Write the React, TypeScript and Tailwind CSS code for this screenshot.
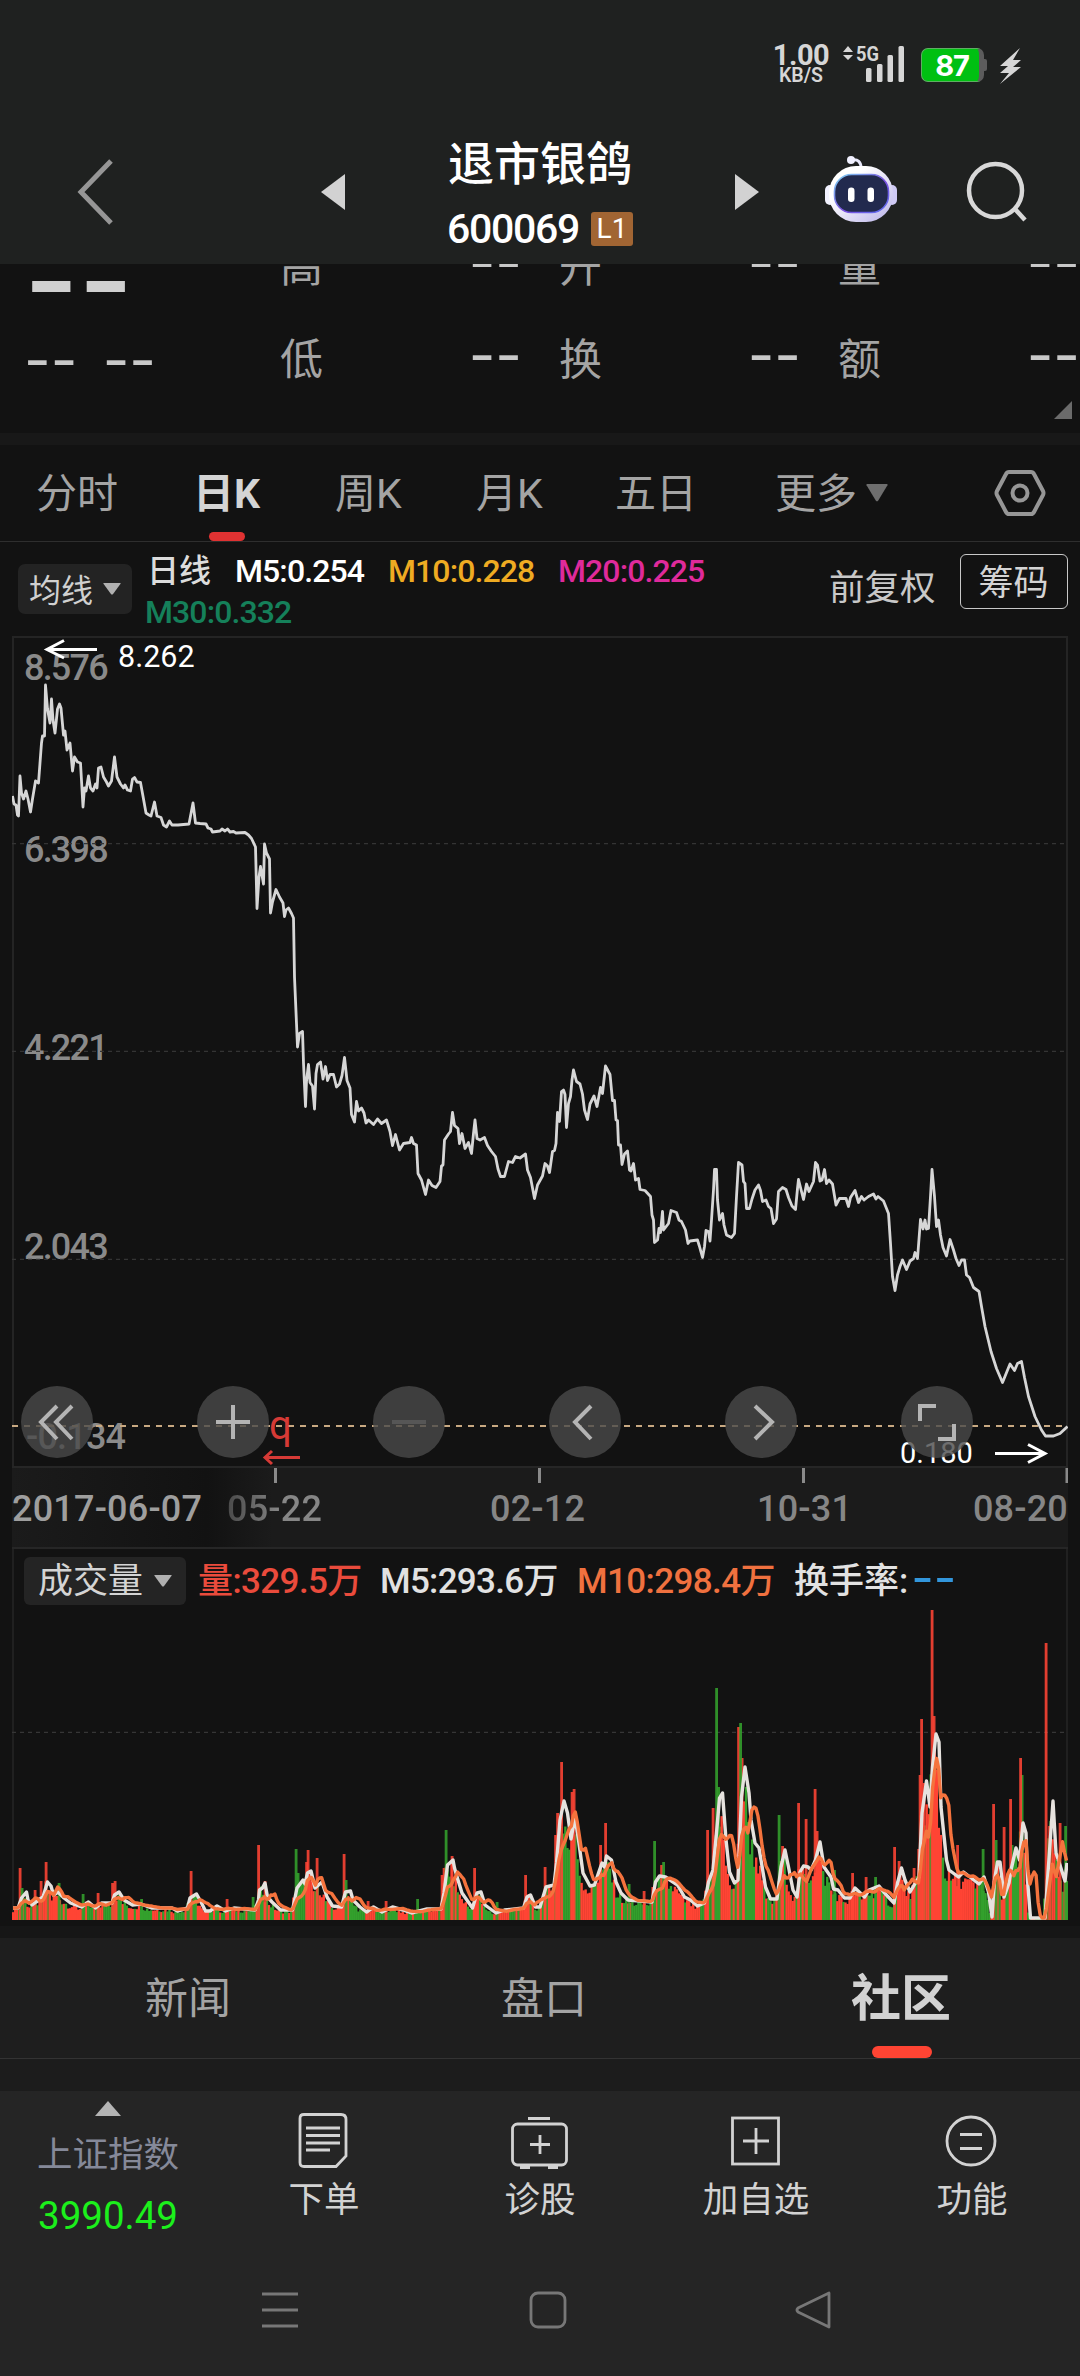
import type { ReactNode } from 'react';
import clsx from 'clsx';

type Point = [number, number];
type Spike = [number, number, 'r' | 'g'];

const UP = '#ff4434';
const DOWN = '#33a02c';
const VOLUME_BASE = 1920;

// daily close, already projected on the page grid
const closeLine =
	'12.5,796 14,804 16,805 17.5,815 18.5,816 20,776 21.5,793 23.5,799 26,791 28,799 30.5,812 32.5,799 35.5,781 38.5,783 41.5,743 42.5,736 44.5,736 45.5,685 47.5,709 50,723 51.5,699 53,720 55,733 57.5,709 59.5,704 61,708 63.5,735 65,731 67,750 70,743 72.5,771 74.5,757 77.5,762 80.5,763 83,807 84.5,788 86,791 88.5,776 90.5,788 93,791 95.5,784 97,788 98.5,768 101,767 103.5,777 106.5,782 108.5,786 111.5,781 114.5,757 117,777 120.5,784 123.5,788 125,785 127.5,790 130.5,791 132.5,779 134.5,777.5 137,782 140.5,782.5 143.5,799 146,813 149,815 151,816 154.5,802 157,816 161,817.5 163.5,825 166.5,827 169.5,821 172,825 178,825 189,824 193,803 195.5,823 200,823.5 206,824 208,828 211,829 212.5,832 220,831 222,829 225,831 227.5,829 230,832 233.5,831.5 236,833 245,832.5 248.5,835 251.5,838.5 255.5,847 257,908.5 259,877 260.5,866.5 263.5,884 264.5,844 266.5,853 269.5,859 270.5,913 272.5,902 276,889.5 279.5,897 283,903 284.5,916.5 286,910 288.5,908 291.5,913.5 293.5,918 294.5,977 296.5,1023.5 297.5,1047 299.5,1033.5 302.5,1031.5 303.5,1063 305.5,1106.5 306.5,1081 308.5,1064.5 310,1082.5 312.5,1086 314.5,1109 316,1073.5 317.5,1064.5 320.5,1062 323,1079 325.5,1066.5 327.5,1080.5 330,1074.5 333.5,1074.5 336.5,1087 339.5,1084 342,1075.5 344.5,1057.5 347,1080.5 350,1088 351.5,1114.5 354.5,1122 356.5,1101.5 358.5,1111 ' +
	'361.5,1108 364,1113 366,1123 368.5,1120 373.5,1124.5 377.5,1119 381.5,1123.5 386.5,1120 390,1131.5 392.5,1145.5 395.5,1134.5 399.5,1150 403.5,1143.5 410,1142.5 411.5,1137.5 413.5,1143.5 416.5,1145 418,1173.5 421.5,1180 425.5,1194.5 428.5,1180 432,1185.5 436,1187.5 440,1181.5 441.5,1166 443,1165 444.5,1140 448.5,1134 450.5,1131.5 452.5,1112.5 454.5,1125.5 458,1128.5 459.5,1143.5 462,1133.5 465,1148.5 468.5,1142.5 471.5,1153.5 473.5,1133.5 475,1120 477,1138.5 480,1140 484.5,1137.5 487.5,1145.5 491.5,1151.5 495.5,1156.5 498,1169 500.5,1176.5 504.5,1176.5 508.5,1161.5 512.5,1162.5 515.5,1156.5 520,1158 525.5,1154 527.5,1170 530.5,1177.5 534.5,1198.5 537.5,1185 542.5,1176 545,1163.5 547.5,1166 549.5,1172.5 552.5,1151.5 554.5,1150.5 556,1143.5 557.5,1112.5 559.5,1121.5 561.5,1091.5 563.5,1090 565,1094.5 566.5,1127.5 568.5,1103.5 570.5,1096.5 572,1080 573.5,1070 576.5,1081.5 580,1084 582.5,1094 584.5,1110 587.5,1119.5 590,1104 594,1096 597,1106.5 600.5,1087.5 602.5,1093.5 605.5,1066 610,1074.5 612.5,1100.5 614.5,1100.5 616,1120 617.5,1120.5 618.5,1145 620.5,1145 622,1164.5 624.5,1154 627.5,1151 629.5,1170 631,1171 633.5,1163.5 635.5,1180 638.5,1178.5 640,1189.5 645,1190.5 650.5,1196.5 652,1215 653.5,1220 654.5,1242.5 657.5,1240 659,1228.5 660.5,1232.5 662.5,1211.5 663.5,1230 668.5,1223.5 671,1210.5 676.5,1212.5 679,1220 681.5,1221.5 685.5,1230 688,1243.5 690,1241 697.5,1240 699.5,1246.5 702.5,1257.5 704.5,1246.5 706,1230.5 708.5,1231.5 710,1241 711.5,1220 713.5,1190 714.5,1169.5 716.5,1169.5 717.5,1200 719.5,1220 ' +
	'722.5,1213.5 724,1225 726.5,1235 731.5,1237.5 734.5,1233.5 736.5,1196.5 738.5,1162.5 742,1165 743.5,1181.5 745,1183.5 746.5,1208.5 749.5,1208.5 752,1199 755,1190 758.5,1185 760.5,1190.5 762.5,1201.5 766,1200 768.5,1206.5 771,1208.5 773.5,1223.5 776.5,1219 778.5,1191.5 782.5,1187.5 786,1189.5 788.5,1197.5 792,1206 795.5,1209.5 797.5,1188.5 798.5,1179.5 801,1189.5 803.5,1199.5 806.5,1184 809,1191.5 813.5,1181.5 815.5,1162.5 817.5,1165 820,1181 822,1180 824.5,1169.5 826.5,1183.5 829,1180 832.5,1184 836,1205 839.5,1198.5 846,1198.5 848.5,1206.5 850.5,1197.5 855,1190.5 858.5,1202.5 861.5,1196.5 864,1200 868.5,1196.5 873.5,1194 876,1199 878,1196.5 883.5,1201 886.5,1208.5 888.5,1213.5 890.5,1243.5 892.5,1276.5 895,1290.5 897.5,1275 900,1266.5 902.5,1260 906.5,1269.5 910,1261 913.5,1258.5 915,1252.5 917.5,1258.5 920.5,1219.5 923,1229 925,1220 926.5,1229 928.5,1228.5 930.5,1196.5 932,1169.5 934.5,1196.5 936.5,1226.5 938.5,1220 940.5,1235 943,1247.5 946.5,1256 950,1239.5 953.5,1250 956,1258.5 959,1265.5 961.5,1260 964.5,1260 966.5,1275 969.5,1277.5 973.5,1287.5 979,1291.5 981.5,1306.5 985,1326.5 991,1351.5 996.5,1368.5 1002.5,1382.5 1010,1364 1014.5,1370.5 1017.5,1363.5 1021.5,1361.5 1024.5,1377.5 1028.5,1396.5 1035,1416.5 1041.5,1430 1045.5,1436 1053.5,1436 1060,1433.5 1067.5,1426.5';

const ma5: Point[] = [
	[13, 1908], [18, 1908], [21.5, 1898], [26.5, 1892], [28, 1900], [32, 1905], [36, 1902], [43, 1897], [47.5, 1882], [51, 1886],
	[53.5, 1895], [58, 1892], [64, 1898], [70.5, 1903], [81.5, 1907], [88.5, 1902], [95.5, 1908], [101.5, 1903], [112, 1903], [114.5, 1895],
	[119, 1892], [124, 1900], [132.5, 1905], [141, 1904], [151.5, 1908], [172, 1908], [177.5, 1911], [187.5, 1908], [190, 1898], [196.5, 1894],
	[201.5, 1903], [205.5, 1911], [210, 1911], [217, 1906], [225.5, 1911], [234, 1908], [255, 1910], [258.5, 1900], [259.5, 1890], [262.5, 1888],
	[265, 1883], [267.5, 1897], [272, 1902], [280.5, 1910], [292.5, 1910], [297, 1888], [303, 1880], [305, 1884], [307.5, 1873], [311, 1871],
	[315, 1888], [322, 1882], [327, 1897], [332.5, 1906], [341.5, 1907], [345.5, 1892], [350.5, 1891], [353, 1900], [360, 1907], [366.5, 1912],
	[373.5, 1907], [382, 1912], [392.5, 1907], [403, 1910], [411.5, 1913], [427, 1909], [441, 1909], [444, 1893], [447.5, 1865], [453, 1860],
	[454.5, 1868], [458, 1880], [462, 1893], [472.5, 1908], [477, 1893], [481, 1892], [485, 1905], [496, 1913], [504.5, 1910], [523.5, 1908],
	[527, 1897], [530.5, 1895], [535.5, 1907], [540, 1907], [546, 1887], [554, 1885], [556.5, 1863], [560, 1820], [564, 1801], [567.5, 1813],
	[571, 1839], [575, 1817], [578.5, 1840], [583, 1873], [590, 1886], [594.5, 1885], [598.5, 1873], [602, 1863], [604.5, 1867], [606.5, 1856],
	[611.5, 1860], [616, 1882], [621, 1893], [628, 1900], [652, 1902], [655.5, 1882], [659.5, 1876], [665.5, 1877], [677.5, 1885], [684.5, 1897],
	[690.5, 1900], [697.5, 1906], [704.5, 1903], [708.5, 1882], [713, 1870], [716.5, 1833], [719.5, 1798], [722.5, 1793], [726, 1840], [729.5, 1872],
	[734.5, 1883], [738, 1880], [741.5, 1797], [745, 1767], [749, 1793], [751, 1820], [755, 1843], [759, 1848], [765.5, 1887], [770.5, 1899],
	[777, 1899], [781, 1867], [785, 1850], [788.5, 1867], [793, 1890], [797, 1897], [800, 1872], [803.5, 1866], [808, 1867], [811, 1870],
	[815.5, 1860], [820, 1842], [824, 1867], [831, 1877], [833.5, 1889], [838, 1890], [844.5, 1898], [850, 1898], [855, 1888], [864.5, 1897],
	[869, 1890], [879, 1886], [884.5, 1893], [894, 1903], [897.5, 1883], [901.5, 1868], [905, 1880], [910, 1892], [919, 1877], [922, 1813],
	[926.5, 1781], [930, 1807], [932.5, 1767], [936, 1734], [939, 1742], [941, 1807], [946.5, 1860], [949, 1870], [958.5, 1877], [963.5, 1872],
	[979, 1884], [984, 1877], [988.5, 1892], [992, 1917], [994.5, 1880], [997.5, 1862], [1000, 1862], [1004, 1897], [1009, 1883], [1011, 1870],
	[1016, 1848], [1019.5, 1860], [1023, 1823], [1026, 1833], [1027.5, 1880], [1030.5, 1918], [1045, 1918], [1048, 1873], [1053, 1801], [1056, 1853],
	[1059, 1862], [1065, 1881], [1067, 1863],
];

const spikes: Spike[] = [
	[20, 1868, 'r'], [22, 1888, 'g'], [35, 1890, 'r'], [41, 1881, 'r'], [46, 1862, 'r'], [59, 1883, 'g'], [83, 1894, 'g'], [98, 1893, 'r'],
	[112.5, 1883, 'r'], [115, 1881, 'r'], [141.5, 1899, 'g'], [191, 1871, 'r'], [227, 1899, 'r'], [253, 1897, 'g'], [258.5, 1845, 'r'],
	[265, 1881, 'r'], [296, 1849, 'g'], [298, 1873, 'g'], [306.5, 1862, 'r'], [308, 1850, 'r'], [317, 1858, 'r'], [344, 1854, 'r'],
	[346, 1880, 'g'], [368, 1901, 'r'], [386, 1901, 'r'], [417.5, 1899, 'g'], [442, 1875, 'r'], [444, 1868, 'r'], [446, 1830, 'g'],
	[452, 1856, 'r'], [474.5, 1868, 'r'], [497, 1902, 'g'], [525.5, 1875, 'r'], [545, 1867, 'r'], [555.5, 1835, 'r'], [557.5, 1813, 'r'],
	[561.5, 1762, 'r'], [572, 1792, 'r'], [574, 1789, 'r'], [600.5, 1845, 'r'], [605.5, 1823, 'r'], [629, 1884, 'g'], [644, 1891, 'r'],
	[654.5, 1841, 'g'], [661.5, 1865, 'r'], [663.5, 1862, 'g'], [707.5, 1830, 'r'], [713, 1808, 'r'], [718.5, 1787, 'g'], [716.5, 1688, 'g'],
	[738.5, 1727, 'r'], [742, 1758, 'r'], [740.5, 1723, 'g'], [779, 1815, 'g'], [782.5, 1846, 'r'], [798.5, 1803, 'r'], [806, 1819, 'r'],
	[817, 1831, 'r'], [815, 1789, 'r'], [834.5, 1870, 'g'], [852.5, 1873, 'r'], [866, 1877, 'r'], [875.5, 1877, 'g'], [894.5, 1847, 'r'],
	[899, 1861, 'r'], [914, 1868, 'r'], [920, 1775, 'r'], [924, 1783, 'r'], [921.5, 1719, 'r'], [934, 1716, 'r'], [932, 1610, 'r'],
	[957.5, 1845, 'r'], [983, 1849, 'g'], [993.5, 1804, 'r'], [996, 1840, 'g'], [1004, 1827, 'r'], [1012, 1845, 'g'], [1010.5, 1799, 'r'],
	[1022, 1775, 'g'], [1020.5, 1758, 'r'], [1049.5, 1826, 'r'], [1046, 1643, 'r'], [1060, 1823, 'r'], [1065.5, 1826, 'g'],
];

const sampleMa5 = (x: number) => {
	const next = ma5.findIndex(([px]) => px >= x);
	if (next === 0) return ma5[0][1];
	if (next < 0) return ma5[ma5.length - 1][1];
	const [x0, y0] = ma5[next - 1];
	const [x1, y1] = ma5[next];
	return y0 + ((y1 - y0) * (x - x0)) / (x1 - x0);
};

const noise = (n: number) => {
	const v = Math.sin(n * 12.9898) * 43758.5453;
	return v - Math.floor(v);
};

const BAR_STEP = 2.03;

const bars = Array.from({ length: 520 }, (_, i) => {
	const x = 12 + i * BAR_STEP;
	const average = VOLUME_BASE - sampleMa5(x + 3);
	return {
		x,
		height: Math.max(1.5, average * (0.65 + noise(i) * 0.4)),
		color: noise(i + 700) + noise(Math.floor(i / 5) + 90) * 0.6 > 0.8 ? UP : DOWN,
	};
});

// MA10 is the mean of MA5 today and MA5 five sessions ago
const ma10Points = Array.from({ length: 520 }, (_, i) => {
	const x = 13 + i * BAR_STEP;
	return `${x.toFixed(1)},${((sampleMa5(x) + sampleMa5(x - 5 * BAR_STEP)) / 2).toFixed(1)}`;
}).join(' ');

const StatusBar = () => (
	<div className="flex h-[128px] items-start justify-end pr-[58px] pt-[43px] text-[#d6d6d6]">
		<div className="flex w-[58px] flex-col items-center">
			<span className="text-[29px] font-bold leading-[24px] tracking-[-0.5px]">1.00</span>
			<span className="text-[19.5px] font-semibold leading-[17px]">KB/S</span>
		</div>
		<svg className="ml-[11px] mt-[1px] h-[40px] w-[64px]" viewBox="842 44 64 40" fill="#d6d6d6">
			<path d="M844 52l5-6 5 6zM844 55h10l-5 5z" />
			<rect x="867" y="68" width="5.5" height="14" rx="1.5" />
			<rect x="878" y="64" width="5.5" height="18" rx="1.5" />
			<rect x="888.5" y="55" width="5.5" height="27" rx="1.5" />
			<rect x="899.5" y="46" width="5.5" height="36" rx="1.5" />
			<text x="857" y="61" fontSize="21" fontWeight="700" textLength="23" lengthAdjust="spacingAndGlyphs">5G</text>
		</svg>
		<div className="ml-[16px] mt-[5px] flex items-center">
			<div className="flex h-[34px] w-[63px] items-center justify-center rounded-[7px] border border-[#5fae63] border-r-[5px] border-r-[#5c5c5c] bg-[#00c012] pl-[3px] font-[Inter] text-[29px] font-bold leading-none tracking-[-1px] text-white">
				87
			</div>
			<div className="h-[12px] w-[3px] rounded-r-[2px] bg-[#5c5c5c]" />
		</div>
		<svg className="ml-[12px] mt-[4px] h-[37px] w-[23px]" viewBox="999 46 23 37" fill="#d6d6d6">
			<path d="M1020 47l-20 18h8l-8 7h9l-9 11 21-17h-8l8-7h-8z" />
		</svg>
	</div>
);

const Robot = () => (
	<svg className="-mt-2 ml-[64px] h-[76px] w-[76px]" viewBox="823 154 76 76">
		<defs>
			<linearGradient id="shell" x1="0" y1="0" x2="1" y2="1">
				<stop offset="0.3" stopColor="#ffffff" />
				<stop offset="1" stopColor="#b9b3ea" />
			</linearGradient>
			<linearGradient id="rim" x1="0" y1="0" x2="1" y2="1">
				<stop offset="0" stopColor="#7fd8f5" />
				<stop offset="0.55" stopColor="#7a4fe0" />
				<stop offset="1" stopColor="#5a6ff0" />
			</linearGradient>
		</defs>
		<path d="M852 160c6-1 9 2 9 8" fill="none" stroke="#e9e9fb" strokeWidth="3" />
		<circle cx="851" cy="160" r="4" fill="#f1f1ff" />
		<rect x="825" y="185" width="10" height="20" rx="5" fill="#f2f2ff" />
		<rect x="887" y="185" width="10" height="20" rx="5" fill="#cfcaf5" />
		<rect x="829" y="166" width="64" height="56" rx="27" fill="url(#shell)" />
		<rect x="834.5" y="174.5" width="54" height="38" rx="17" fill="#222a4e" stroke="url(#rim)" strokeWidth="1.6" />
		<rect x="848" y="187.5" width="6.5" height="14.5" rx="3.2" fill="#fff" />
		<rect x="867.5" y="187.5" width="6.5" height="14.5" rx="3.2" fill="#fff" />
	</svg>
);

const Header = () => (
	<header className="h-[264px] bg-[#1f2120]">
		<StatusBar />
		<div className="flex h-[136px] items-center">
			<svg className="-mt-2 ml-[76px] h-[68px] w-[38px]" viewBox="0 0 38 68" fill="none" stroke="#969696" strokeWidth="5">
				<path d="M35 3L5 34l30 31" />
			</svg>
			<svg className="-mt-2 ml-[207px] h-[36px] w-[24px]" viewBox="0 0 24 36" fill="#d2d2d2">
				<path d="M24 0v36L0 18z" />
			</svg>
			<div className="ml-[60px] flex w-[270px] flex-col items-center text-white">
				<h1 className="mt-[1px] text-[46px] font-medium leading-[65px]">退市银鸽</h1>
				<div className="flex h-[65px] items-center gap-[12px]">
					<span className="text-[41px] font-medium leading-none tracking-[-1.3px]">600069</span>
					<span className="flex h-[34px] w-[42px] items-center justify-center rounded-[3px] bg-[#a16533] text-[28px] leading-none">
						L1
					</span>
				</div>
			</div>
			<svg className="-mt-2 ml-[60px] h-[36px] w-[24px]" viewBox="0 0 24 36" fill="#d2d2d2">
				<path d="M0 0v36l24-18z" />
			</svg>
			<Robot />
			<svg className="-mt-2 ml-[67px] h-[66px] w-[62px]" viewBox="965 159 62 66" fill="none" stroke="#d8d8d8" strokeWidth="4.5">
				<circle cx="994.5" cy="190.5" r="26.5" />
				<path d="M1013 208l11 12" />
			</svg>
		</div>
	</header>
);

type QuoteProps = {
	label: string;
};

const Quote = ({ label }: QuoteProps) => (
	<div className="flex h-[93px] items-center justify-between pt-[2px]">
		<span className="text-[43px] text-[#a4a4a4]">{label}</span>
		<span className="h-[62px] font-[Inter] text-[58px] leading-[51px] text-[#c8c8c8]">--</span>
	</div>
);

const QuotePanel = () => (
	<section className="relative h-[169px] overflow-hidden">
		<div className="-mt-[44px] flex">
			<div className="w-[280px] shrink-0 font-[Inter] text-[#cfcfcf]">
				<div className="h-[93px] pl-[24px] text-[118px] font-medium leading-[121px]">--</div>
				<div className="h-[93px] pl-[24px] text-[58px] leading-[94px] text-[#c8c8c8] [word-spacing:9px]">-- --</div>
			</div>
			<div className="grid w-[804px] shrink-0 grid-cols-[242px_242px_242px] gap-x-[37px]">
				<Quote label="高" />
				<Quote label="开" />
				<Quote label="量" />
				<Quote label="低" />
				<Quote label="换" />
				<Quote label="额" />
			</div>
		</div>
		<svg className="absolute bottom-[14px] right-[8px] h-[18px] w-[18px]" viewBox="0 0 18 18" fill="#6b6b6b">
			<path d="M18 0v18H0z" />
		</svg>
	</section>
);

const Triangle = ({ className }: { className: string }) => (
	<svg className={className} viewBox="0 0 20 14" preserveAspectRatio="none" fill="currentColor">
		<path d="M1 0h18q1 0 .5 1L11 13q-1 1-2 0L.5 1Q0 0 1 0z" />
	</svg>
);

const PeriodTabs = () => (
	<nav className="relative flex h-[97px] items-center border-b border-[#2e2e2e] text-[41px] leading-[46px] text-[#a4a4a4]">
		<span className="ml-[36px] mt-[2px] w-[157px]">分时</span>
		<span className="mt-[2px] w-[142px] font-bold text-[#d4d4d4]">日K</span>
		<span className="mt-[2px] w-[141px]">周K</span>
		<span className="mt-[2px] w-[139px]">月K</span>
		<span className="mt-[2px] w-[160px]">五日</span>
		<span className="mt-[2px] w-[91px]">更多</span>
		<Triangle className="h-[18px] w-[22px] text-[#6e6e6e]" />
		<svg className="ml-[106px] h-[50px] w-[52px]" viewBox="0 0 52 50" fill="none" stroke="#969696" strokeWidth="4">
			<path d="M15 4h22q2 0 3 2l9 17q1 2 0 4l-9 17q-1 2-3 2H15q-2 0-3-2L3 27q-1-2 0-4l9-17q1-2 3-2z" />
			<circle cx="26" cy="25" r="7.5" />
		</svg>
		<i className="absolute bottom-0 left-[209px] h-[9px] w-[36px] rounded-[5px] bg-[#e03232]" />
	</nav>
);

const AverageLegend = () => (
	<div className="flex h-[94px] items-start">
		<div className="ml-[18px] mt-[22px] flex h-[50px] w-[114px] items-center justify-center gap-[10px] rounded-[7px] bg-[#232323] text-[32px] text-[#d0d0d0]">
			<span className="mt-[4px] leading-[36px]">均线</span>
			<Triangle className="h-[12px] w-[18px] text-[#b0b0b0]" />
		</div>
		<div className="ml-[15px] mt-[9px] w-[660px] text-[32px] font-medium leading-[41px]">
			<div className="flex">
				<span className="w-[88px] text-[#dcdcdc]">日线</span>
				<span className="w-[153px] tracking-[-0.9px] text-white">M5:0.254</span>
				<span className="w-[170px] tracking-[-0.9px] text-[#efab22]">M10:0.228</span>
				<span className="tracking-[-0.9px] text-[#df2a9b]">M20:0.225</span>
			</div>
			<div className="-ml-[2px] tracking-[-0.9px] text-[#15805a]">M30:0.332</div>
		</div>
		<span className="ml-[22px] mt-[26px] text-[35.5px] leading-[40px] text-[#c8c8c8]">前复权</span>
		<span className="ml-[24px] mt-[12px] flex h-[55px] w-[108px] items-center justify-center rounded-[6px] border-[1.5px] border-[#c8c8c8] pt-[4px] text-[35px] leading-[40px] text-[#d4d4d4]">
			筹码
		</span>
	</div>
);

const RoundButton = ({ children, dim }: { children: ReactNode; dim?: boolean }) => (
	<button className="flex h-[72px] w-[72px] items-center justify-center rounded-full bg-[#4a4a4a]/80">
		<svg
			className={clsx('h-[72px] w-[72px]', dim ? 'stroke-[#565656]' : 'stroke-[#b4b4b4]')}
			viewBox="0 0 72 72"
			fill="none"
			strokeWidth="4"
		>
			{children}
		</svg>
	</button>
);

const ChartTools = () => (
	<div className="absolute left-[7px] top-[748px] flex gap-[104px]">
		<RoundButton>
			<path d="M36 20L20 36l16 17M51 20L35 36l16 17" />
		</RoundButton>
		<RoundButton>
			<path d="M19 36h34M36 19v34" />
		</RoundButton>
		<RoundButton dim>
			<path d="M19 36h34" />
		</RoundButton>
		<RoundButton>
			<path d="M42 20L26 36l16 17" />
		</RoundButton>
		<RoundButton>
			<path d="M30 20l17 16-17 17" />
		</RoundButton>
		<RoundButton>
			<path d="M19 35V20h16M37 53h16V38" />
		</RoundButton>
	</div>
);

const PriceChart = () => (
	<section className="relative mx-[12px] h-[830px] border-2 border-b-0 border-[#242424]">
		<div className="absolute left-[10px] top-0 text-[36px] font-medium leading-[42px] tracking-[-1.8px] text-[#8a8a8a]">
			<span className="absolute left-0 top-[9px]">8.576</span>
			<span className="absolute left-0 top-[191px]">6.398</span>
			<span className="absolute left-0 top-[389px]">4.221</span>
			<span className="absolute left-0 top-[588px]">2.043</span>
			<span className="absolute left-[2px] top-[778px] whitespace-nowrap tracking-[-0.8px]">-0.134</span>
		</div>
		<svg className="absolute -left-[2px] -top-[2px] h-[830px] w-[1056px]" viewBox="12 636 1056 830" fill="none">
			<g stroke="#343434" strokeWidth="1.2" strokeDasharray="4 4">
				<path d="M12 843.6h1056M12 1051.4h1056M12 1259.3h1056" />
			</g>
			<path d="M12 1426h1056" stroke="#c8a982" strokeWidth="2" strokeDasharray="6 6" />
			<polyline points={closeLine} stroke="#d6d6d6" strokeWidth="2.8" strokeLinejoin="round" />
			<g stroke="#fff" strokeWidth="3">
				<path d="M97 649.5H47M64 640.5l-17 9 17 8.500" />
				<path d="M995 1453.500h50M1028 1444.500l17 9-17 9" />
			</g>
			<path d="M300 1457.500h-34M272 1451l-7 6.500 7 6.500" stroke="#d63a36" strokeWidth="3" />
		</svg>
		<span className="absolute left-[104px] top-[1px] text-[30.5px] leading-[36px] text-white">8.262</span>
		<span className="absolute left-[255px] top-[766px] text-[40px] leading-[44px] text-[#d63a36]">q</span>
		<span className="absolute left-[886px] top-[797px] text-[29px] leading-[36px] text-white">0.180</span>
		<ChartTools />
	</section>
);

const TimeAxis = () => (
	<div className="relative mx-[12px] h-[83px] border-y-2 border-[#262626] bg-[linear-gradient(90deg,#1b1b1b_0px,#121212_195px,#1b1b1b_260px)] pt-[20px] text-[36px] font-medium leading-[42px] tracking-[0.2px] text-[#868686]">
		<svg className="absolute left-0 top-0 h-[15px] w-[1056px]" viewBox="12 0 1056 15" stroke="#8a8a8a" strokeWidth="3">
			<path d="M275.500 0v15M539.500 0v15M803.500 0v15M1067 0v15" />
		</svg>
		<div className="flex">
			<span className="w-[215px] text-[#9e9e9e]">2017-06-07</span>
			<span className="w-[263px] bg-gradient-to-r from-[#4a4a4a] to-[#868686] to-20% bg-clip-text text-transparent">05-22</span>
			<span className="w-[267px]">02-12</span>
			<span>10-31</span>
			<span className="ml-auto">08-20</span>
		</div>
	</div>
);

const VolumeChart = () => (
	<section className="relative mx-[12px] h-[371px] border-x-2 border-[#202020]">
		<svg className="absolute -left-[2px] top-0 h-[371px] w-[1056px]" viewBox="12 1549 1056 371" fill="none">
			<path d="M12 1732.300h1056" stroke="#363636" strokeWidth="1.200" strokeDasharray="4 4" />
			{bars.map(bar => (
				<rect
					key={bar.x}
					x={bar.x}
					y={VOLUME_BASE - bar.height}
					width="2.4"
					height={bar.height}
					fill={bar.color}
				/>
			))}
			{spikes.map(([x, top, side]) => (
				<rect
					key={x}
					x={x - 1.3}
					y={top}
					width="2.8"
					height={VOLUME_BASE - top}
					fill={side === 'r' ? UP : DOWN}
					opacity="0.88"
				/>
			))}
			<polyline
				points={ma5.map(point => point.join(',')).join(' ')}
				stroke="#e6e2de"
				strokeWidth="3.4"
				strokeLinejoin="round"
			/>
			<polyline points={ma10Points} stroke="#f5733d" strokeWidth="3.4" strokeLinejoin="round" />
		</svg>
		<div className="relative flex pl-[10px] pt-[8px] text-[35px] font-medium leading-[48px]">
			<div className="flex h-[48px] w-[162px] items-center justify-center gap-[11px] rounded-[6px] bg-[#242424] font-normal text-[#d4d4d4]">
				<span className="mt-[2px]">成交量</span>
				<Triangle className="h-[12px] w-[18px] text-[#b0b0b0]" />
			</div>
			<span className="ml-[12px] mt-[1px] w-[182px] whitespace-nowrap tracking-[-0.6px] text-[#ea4b3c]">量:329.5万</span>
			<span className="mt-[1px] w-[197px] whitespace-nowrap tracking-[-0.7px] text-[#e2e2e2]">M5:293.6万</span>
			<span className="mt-[1px] w-[217px] whitespace-nowrap tracking-[-0.6px] text-[#f0713f]">M10:298.4万</span>
			<span className="mt-[1px] text-[#e2e2e2]">换手率:</span>
			<span className="ml-[3px] font-[Inter] text-[49px] font-normal leading-[42px] text-[#3296dc]">--</span>
		</div>
	</section>
);

const SectionTabs = () => (
	<nav className="flex h-[121px] items-center border-b border-[#333] bg-[#1e1e1e] text-[43px] leading-[50px] text-[#a4a4a4]">
		<span className="ml-[145px] mt-[2px] w-[356px]">新闻</span>
		<span className="mt-[2px] w-[350px]">盘口</span>
		<span className="relative flex h-full items-center pt-[2px] text-[50px] font-bold text-[#d2d2d2]">
			社区
			<i className="absolute bottom-0 left-[21px] h-[12px] w-[60px] rounded-[6px] bg-[#ff4433]" />
		</span>
	</nav>
);

const actions = [
	{
		label: '下单',
		icon: (
			<>
				<path d="M10 4.500h37q5 0 5 5V46L42 56.500H10q-4 0-4-4v-44q0-4 4-4z" />
				<path d="M12 18h34M12 25.500h34M12 33h34M12 40h24" strokeWidth="3" />
			</>
		),
	},
	{
		label: '诊股',
		icon: (
			<>
				<rect x="2.500" y="14" width="54" height="41" rx="5" />
				<path d="M18 8.500h22M30 25v19M20 34.500h20" />
				<path d="M10 57h10M38 57h10" strokeWidth="4" />
			</>
		),
	},
	{
		label: '加自选',
		icon: (
			<>
				<rect x="6.500" y="8" width="46" height="46" />
				<path d="M30 18v26M17 31h26" />
			</>
		),
	},
	{
		label: '功能',
		icon: (
			<>
				<circle cx="29" cy="31" r="24" />
				<path d="M18 24.500h22M18 38.500h22" />
			</>
		),
	},
];

const ActionBar = () => (
	<footer className="grid h-[159px] grid-cols-5">
		<div className="flex flex-col items-center pt-[10px]">
			<svg className="h-[15px] w-[26px]" viewBox="0 0 26 15" fill="#b4b4b4">
				<path d="M13 0l13 15H0z" />
			</svg>
			<span className="mt-[19px] text-[35.500px] leading-[40px] text-[#858999]">上证指数</span>
			<span className="mt-[19px] text-[38.500px] leading-[44px] text-[#1cf01c]">3990.49</span>
		</div>
		{actions.map(({ label, icon }) => (
			<div key={label} className="flex flex-col items-center pt-[19px]">
				<svg className="h-[60px] w-[60px]" viewBox="0 0 60 60" fill="none" stroke="#d2d2d2" strokeWidth="2.800">
					{icon}
				</svg>
				<span className="mt-[10px] text-[35.500px] leading-[40px] text-[#d2d2d2]">{label}</span>
			</div>
		))}
	</footer>
);

const SystemNav = () => (
	<div className="flex h-[126px] items-start pl-[261px] pt-[41px]">
		<svg className="h-[38px] w-[38px]" viewBox="0 0 38 38" stroke="#777" strokeWidth="3">
			<path d="M1 3h36M1 19h36M1 35h36" />
		</svg>
		<svg className="ml-[230px] h-[38px] w-[38px]" viewBox="0 0 38 38" fill="none" stroke="#777" strokeWidth="2.800">
			<rect x="2" y="2" width="34" height="34" rx="7" />
		</svg>
		<svg className="ml-[228px] h-[38px] w-[38px]" viewBox="0 0 38 38" fill="none" stroke="#777" strokeWidth="2.800" strokeLinejoin="round">
			<path d="M34 2v34L3 21q-2-2 0-4z" />
		</svg>
	</div>
);

const App = () => {
	return (
		<main className="w-[1080px] overflow-hidden bg-[#121212] [font-family:Roboto,'Noto_Sans_CJK_SC',sans-serif]">
			<Header />
			<QuotePanel />
			<div className="h-[12px] bg-[#181818]" />
			<PeriodTabs />
			<AverageLegend />
			<PriceChart />
			<TimeAxis />
			<VolumeChart />
			<div className="mt-[6px] h-[12px] bg-[#161616]" />
			<SectionTabs />
			<div className="h-[32px] bg-[#1c1c1c]" />
			<div className="bg-[#252525]">
				<ActionBar />
				<SystemNav />
			</div>
		</main>
	);
};

export default App;
